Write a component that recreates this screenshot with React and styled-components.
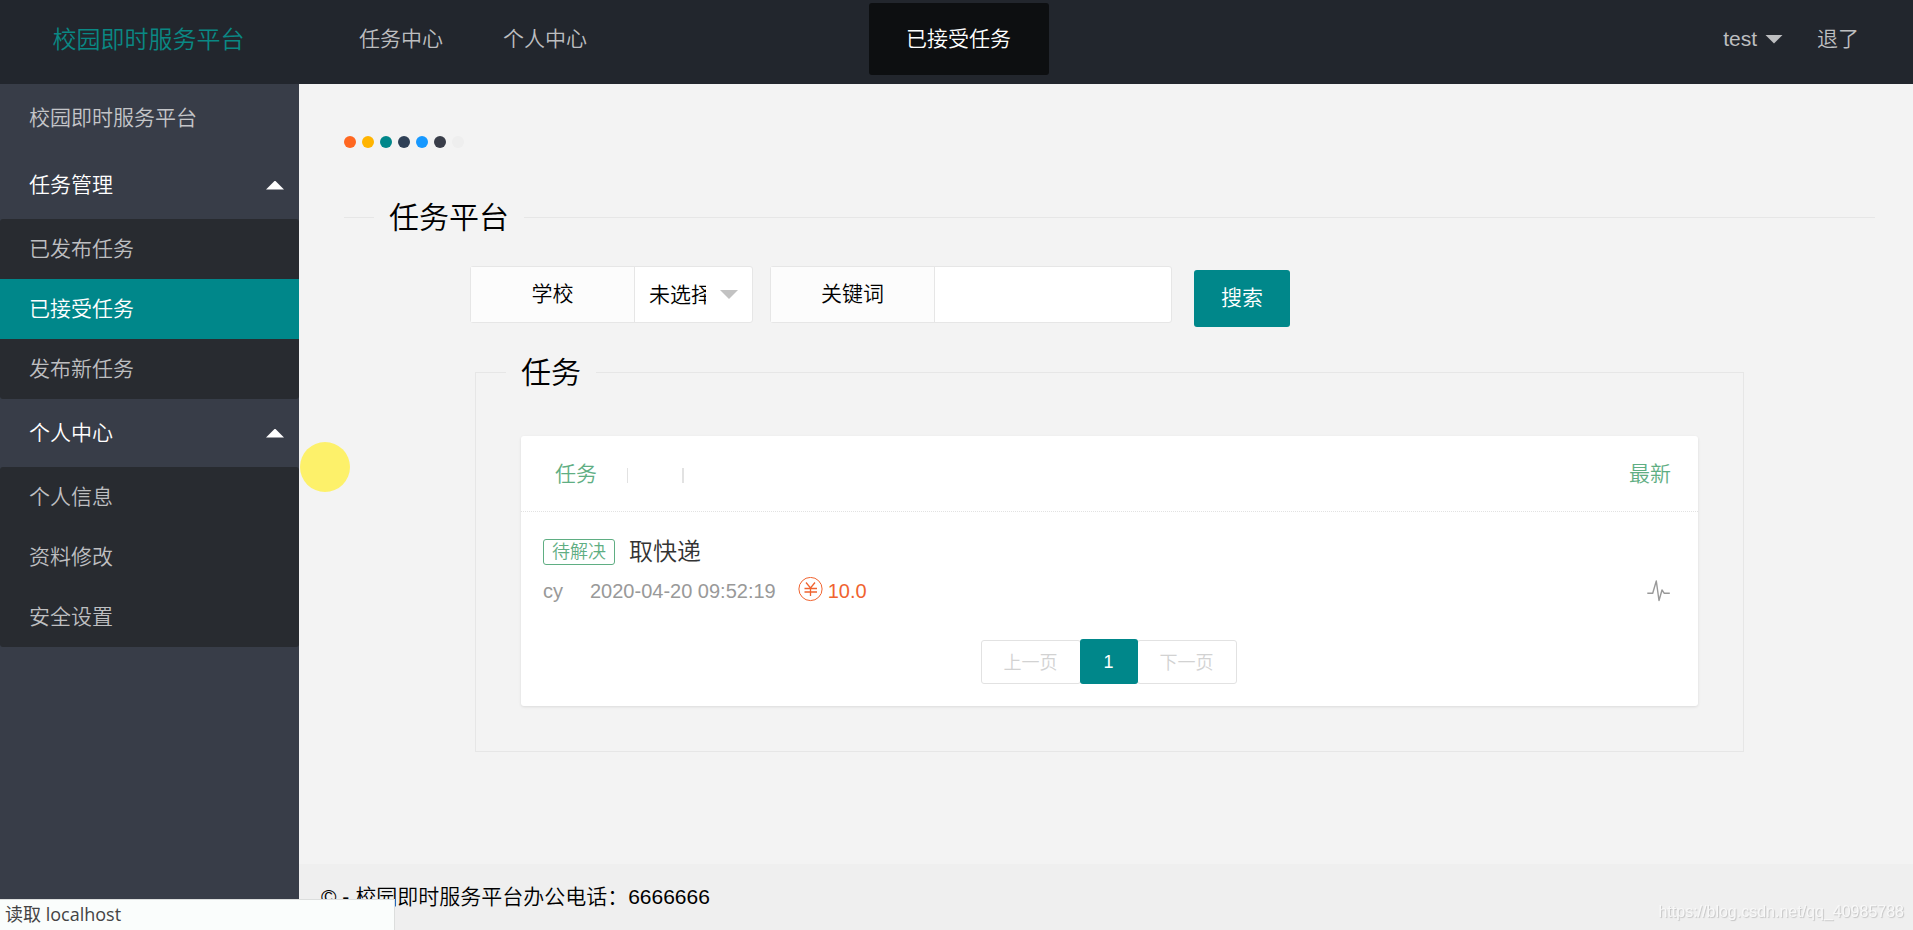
import React, { useState } from "react";
import styled, { createGlobalStyle } from "styled-components";

const GlobalStyle = createGlobalStyle`
  * {
    box-sizing: border-box;
  }
  body {
    margin: 0;
    background: #f3f3f3;
  }
  body, button, input, select {
    font-family: "Liberation Sans", "Noto Sans CJK SC", sans-serif;
    font-size: 21px;
    font-weight: 350;
    color: #000;
  }
  a {
    color: inherit;
    text-decoration: none;
  }
`;

const Page = styled.div`
  display: flex;
  flex-direction: column;
  min-height: 100vh;
`;

const Header = styled.header`
  display: flex;
  height: 84px;
  padding: 0 54px 6px 0;
  background: #22262d;
  color: #bdbec0;
  line-height: 78px;
`;

const Logo = styled.h1`
  width: 299px;
  margin: 0;
  padding-right: 2px;
  color: #0a8884;
  font-size: 24px;
  font-weight: 350;
  line-height: 80px;
  text-align: center;
`;

const TopNav = styled.nav`
  display: flex;
  flex: 1;
  gap: 60px;
  padding-left: 60px;
`;

const UserNav = styled.nav`
  display: flex;
  gap: 34px;
`;

const UserLink = styled.a`
  display: flex;
  align-items: center;
  gap: 8px;
`;

const Triangle = styled.span`
  width: 18px;
  height: 9px;
  background: ${props => props.color};
  clip-path: ${props =>
    props.$up
      ? "polygon(50% 0, 100% 100%, 0 100%)"
      : "polygon(0 0, 100% 0, 50% 100%)"};
`;

const Body = styled.div`
  display: flex;
  flex: 1;
`;

const Sidebar = styled.aside`
  flex: 0 0 299px;
  background: #383d48;
  color: #c4c5c8;
`;

const SideTitle = styled.a`
  display: block;
  height: 67px;
  padding-left: 29px;
  line-height: 67px;
`;

const SideToggle = styled.button`
  display: flex;
  align-items: center;
  justify-content: space-between;
  width: 100%;
  height: 68px;
  padding: 0 15px 0 29px;
  border: none;
  background: none;
  color: #fff;
  cursor: pointer;
`;

const ToggleText = styled.span`
  padding-bottom: 5px;
`;

const SubMenu = styled.div`
  border-radius: 3px;
  background: #282b30;
  overflow: hidden;
`;

const SubLink = styled.a`
  display: block;
  height: 60px;
  padding-left: 29px;
  line-height: 60px;
  background: ${props => (props.$active ? "#00878a" : "transparent")};
  color: ${props => (props.$active ? "#fff" : "#bebfc1")};
`;

const Main = styled.main`
  display: flex;
  flex: 1;
  flex-direction: column;
  min-width: 0;
`;

const Content = styled.div`
  flex: 1;
  padding: 52px 38px 45px 45px;
`;

const Dots = styled.div`
  display: flex;
  gap: 6px;
  margin-bottom: 49px;
`;

const Dot = styled.span`
  width: 12px;
  height: 12px;
  border-radius: 50%;
  background: ${props => props.color};
`;

const Section = styled.fieldset`
  min-width: 0;
  margin: 0;
  padding: 29px 0 0;
  border: none;
  border-top: 1px solid #e6e6e6;
`;

const Legend = styled.legend`
  height: 40px;
  margin-left: 30px;
  padding: 0 15px;
  font-size: 30px;
  line-height: 42px;
`;

const SearchForm = styled.form`
  display: flex;
  align-items: flex-start;
  gap: 17px;
  margin: 0 0 25px 126px;
`;

const Field = styled.div`
  display: flex;
  width: ${props => props.width};
  height: 57px;
  border: 1px solid #e6e6e6;
  border-radius: 3px;
  background: #fff;
`;

const FieldLabel = styled.label`
  flex: 0 0 164px;
  border-right: 1px solid #e6e6e6;
  background: #fcfcfc;
  line-height: 53px;
  text-align: center;
`;

const SelectWrap = styled.div`
  display: flex;
  flex: 1;
  align-items: center;
  min-width: 0;
  padding-right: 14px;
`;

const Select = styled.select`
  flex: 1;
  min-width: 0;
  height: 100%;
  margin-right: 14px;
  padding: 0 0 0 14px;
  border: none;
  outline: none;
  background: none;
  appearance: none;
  text-overflow: clip;
  overflow: hidden;
`;

const Input = styled.input`
  flex: 1;
  min-width: 0;
  padding: 0 14px;
  border: none;
  outline: none;
  background: none;
`;

const SearchButton = styled.button`
  width: 96px;
  height: 57px;
  margin: 4px 0 0 5px;
  padding: 0 0 5px;
  border: none;
  border-radius: 3px;
  background: #00878a;
  color: #fff;
  cursor: pointer;
`;

const Panel = styled.fieldset`
  min-width: 0;
  margin: 0 131px;
  padding: 44px 0 45px;
  border: 1px solid #e6e6e6;
`;

const Card = styled.div`
  margin: 0 45px;
  border-radius: 3px;
  background: #fff;
  box-shadow: 0 1px 3px rgba(0, 0, 0, 0.1);
`;

const CardHeader = styled.div`
  display: flex;
  align-items: center;
  height: 76px;
  padding: 0 27px 0 34px;
  border-bottom: 1px dotted #e2e2e2;
  color: #5fae83;
`;

const CardLink = styled.a`
  padding-bottom: 4px;
`;

const Divider = styled.span`
  width: ${props => props.width};
  height: 15px;
  margin-left: ${props => props.$gap};
  margin-top: 3px;
  background: #e2e2e2;
`;

const Spacer = styled.span`
  flex: 1;
`;

const Task = styled.article`
  padding: 25px 27px 34px 22px;
`;

const TaskHead = styled.div`
  display: flex;
  align-items: center;
  gap: 14px;
  height: 30px;
  margin-bottom: 10px;
`;

const Badge = styled.span`
  height: 26px;
  padding: 0 8px;
  border: 1px solid #5fae83;
  border-radius: 3px;
  color: #5fae83;
  font-size: 18px;
  line-height: 25px;
`;

const TaskTitle = styled.a`
  color: #333;
  font-size: 24px;
  line-height: 30px;
`;

const TaskInfo = styled.div`
  display: flex;
  align-items: flex-start;
  height: 28px;
  color: #999;
  font-size: 20px;
  line-height: 28px;
`;

const TaskTime = styled.time`
  margin: 0 22px 0 27px;
`;

const Price = styled.span`
  display: flex;
  gap: 5px;
  color: #f0632f;
`;

const Pager = styled.nav`
  display: flex;
  align-items: flex-end;
  justify-content: center;
  padding: 0 2px 22px 0;
`;

const PageButton = styled.button`
  width: 100px;
  height: 44px;
  padding: 0 0 2px;
  border: 1px solid #e2e2e2;
  border-radius: 3px;
  background: #fff;
  color: #d2d2d2;
  font-size: 18px;
`;

const CurrentPage = styled.span`
  width: 58px;
  height: 45px;
  margin: 0 -1px;
  border-radius: 3px;
  background: #00878a;
  color: #fff;
  font-size: 18px;
  line-height: 46px;
  text-align: center;
  z-index: 1;
`;

const Footer = styled.footer`
  height: 66px;
  padding-left: 22px;
  background: #efefef;
  line-height: 66px;
`;

const Toast = styled.div`
  position: fixed;
  top: 3px;
  left: 50%;
  width: 180px;
  height: 72px;
  margin-left: -88px;
  border-radius: 3px;
  background: #0d0f11;
  color: #fff;
  line-height: 72px;
  text-align: center;
`;

const Pointer = styled.div`
  position: fixed;
  top: 442px;
  left: 300px;
  width: 50px;
  height: 50px;
  border-radius: 50%;
  background: #fdf16a;
`;

const StatusBar = styled.div`
  position: fixed;
  bottom: 0;
  left: 0;
  width: 395px;
  height: 31px;
  padding-left: 5px;
  border-top: 1px solid #dcdedd;
  border-right: 1px solid #dcdedd;
  background: #fafdfc;
  color: #444;
  font-family: "Open Sans", "Noto Sans CJK SC", sans-serif;
  font-size: 18px;
  font-weight: 400;
  line-height: 29px;
`;

const Watermark = styled.div`
  position: fixed;
  right: 9px;
  bottom: 8px;
  color: #f8f8f8;
  font-size: 16px;
  line-height: 20px;
  text-shadow: 1px 1px 1px #c4c4c4;
`;

const dotColors = [
  "#ff6720",
  "#ffb400",
  "#00878a",
  "#2f4056",
  "#1698ff",
  "#393d49",
  "#eee"
];

const menus = [
  { title: "任务管理", items: ["已发布任务", "已接受任务", "发布新任务"] },
  { title: "个人中心", items: ["个人信息", "资料修改", "安全设置"] }
];

const YenIcon = () => (
  <svg width="25" height="25" viewBox="0 0 25 25" fill="none" stroke="currentColor">
    <circle cx="12.5" cy="12" r="11.6" strokeWidth="1" />
    <path d="M8 5.5l4.5 5.5L17 5.5M6.5 11.5h12.5M6.5 15h12.5M12.5 11v8" strokeWidth="1.3" />
  </svg>
);

const PulseIcon = () => (
  <svg width="25" height="25" viewBox="0 0 25 25" fill="none" stroke="currentColor">
    <path
      d="M1.3 16.3h5.4L10.3 4 13 23.5 16 13l2.3 3.3h5.5"
      strokeWidth="1.4"
      strokeLinejoin="round"
    />
  </svg>
);

const SideMenu = ({ title, items }) => {
  const [open, setOpen] = useState(true);

  return (
    <>
      <SideToggle
        type="button"
        aria-expanded={open}
        onClick={() => setOpen(!open)}
      >
        <ToggleText>{title}</ToggleText>
        <Triangle color="#fff" $up={open} />
      </SideToggle>
      {open && (
        <SubMenu>
          {items.map(item => (
            <SubLink key={item} href="#" $active={item === "已接受任务"}>
              {item}
            </SubLink>
          ))}
        </SubMenu>
      )}
    </>
  );
};

const Search = () => {
  const [keyword, setKeyword] = useState("");

  return (
    <SearchForm onSubmit={e => e.preventDefault()}>
      <Field width="283px">
        <FieldLabel htmlFor="school">学校</FieldLabel>
        <SelectWrap>
          <Select id="school">
            <option>未选择</option>
          </Select>
          <Triangle color="#c2c2c2" />
        </SelectWrap>
      </Field>
      <Field width="402px">
        <FieldLabel htmlFor="keyword">关键词</FieldLabel>
        <Input
          id="keyword"
          type="text"
          value={keyword}
          onChange={e => setKeyword(e.target.value)}
        />
      </Field>
      <SearchButton type="submit">搜索</SearchButton>
    </SearchForm>
  );
};

const TaskCard = () => (
  <Card>
    <CardHeader>
      <CardLink href="#">任务</CardLink>
      <Divider width="1px" $gap="30px" />
      <Divider width="2px" $gap="54px" />
      <Spacer />
      <CardLink href="#">最新</CardLink>
    </CardHeader>
    <Task>
      <TaskHead>
        <Badge>待解决</Badge>
        <TaskTitle href="#">取快递</TaskTitle>
      </TaskHead>
      <TaskInfo>
        <span>cy</span>
        <TaskTime>2020-04-20 09:52:19</TaskTime>
        <Price>
          <YenIcon />
          10.0
        </Price>
        <Spacer />
        <PulseIcon />
      </TaskInfo>
    </Task>
    <Pager>
      <PageButton type="button" disabled>
        上一页
      </PageButton>
      <CurrentPage>1</CurrentPage>
      <PageButton type="button" disabled>
        下一页
      </PageButton>
    </Pager>
  </Card>
);

const App = () => {
  return (
    <Page>
      <GlobalStyle />
      <Header>
        <Logo>校园即时服务平台</Logo>
        <TopNav>
          <a href="#">任务中心</a>
          <a href="#">个人中心</a>
        </TopNav>
        <UserNav>
          <UserLink href="#">
            test
            <Triangle color="#bdbec0" />
          </UserLink>
          <a href="#">退了</a>
        </UserNav>
      </Header>
      <Body>
        <Sidebar>
          <SideTitle href="#">校园即时服务平台</SideTitle>
          {menus.map(menu => (
            <SideMenu key={menu.title} {...menu} />
          ))}
        </Sidebar>
        <Main>
          <Content>
            <Dots>
              {dotColors.map(color => (
                <Dot key={color} color={color} />
              ))}
            </Dots>
            <Section>
              <Legend>任务平台</Legend>
              <Search />
              <Panel>
                <Legend>任务</Legend>
                <TaskCard />
              </Panel>
            </Section>
          </Content>
          <Footer>© - 校园即时服务平台办公电话：6666666</Footer>
        </Main>
      </Body>
      <Toast>已接受任务</Toast>
      <Pointer />
      <StatusBar>读取 localhost</StatusBar>
      <Watermark>https://blog.csdn.net/qq_40985788</Watermark>
    </Page>
  );
};

export default App;
